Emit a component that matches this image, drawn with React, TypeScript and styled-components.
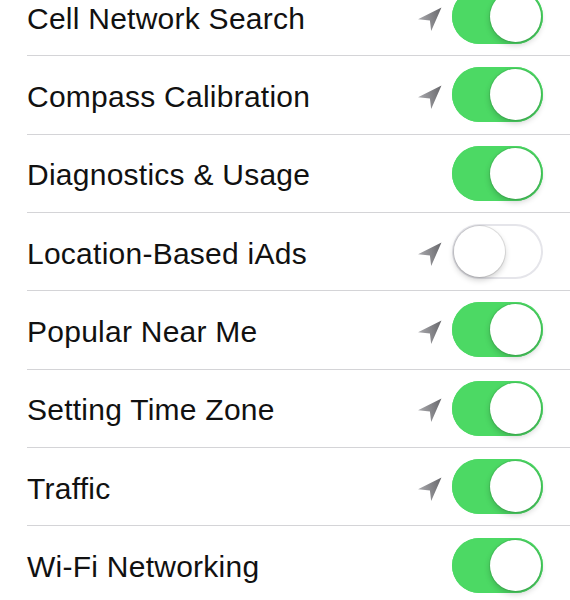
import React from 'react'
import styled, { createGlobalStyle } from 'styled-components'

const GlobalStyle = createGlobalStyle`
  html, body {
    margin: 0;
    padding: 0;
    background: #ffffff;
    overflow: hidden;
  }
  body {
    font-family: "Liberation Sans", Arial, sans-serif;
    -webkit-font-smoothing: antialiased;
  }
`

type Setting = {
  label: string
  on: boolean
  location: boolean
}

const settings: Setting[] = [
  { label: 'Cell Network Search', on: true, location: true },
  { label: 'Compass Calibration', on: true, location: true },
  { label: 'Diagnostics & Usage', on: true, location: false },
  { label: 'Location-Based iAds', on: false, location: true },
  { label: 'Popular Near Me', on: true, location: true },
  { label: 'Setting Time Zone', on: true, location: true },
  { label: 'Traffic', on: true, location: true },
  { label: 'Wi-Fi Networking', on: true, location: false },
]

const LocationArrow = () => (
  <ArrowIcon viewBox="0 0 24 24" aria-hidden>
    <defs>
      <linearGradient id="arrowShade" x1="0" y1="0.5" x2="1" y2="0.3">
        <stop offset="0" stopColor="#a9a9ad" />
        <stop offset="1" stopColor="#6a6a6e" />
      </linearGradient>
    </defs>
    <path d="M23.5 1.5 L1 12.6 L12.4 13.8 L13.6 24 Z" fill="url(#arrowShade)" />
  </ArrowIcon>
)

const App = () => {
  return (
    <>
      <GlobalStyle />
      <List>
        {settings.map((item) => (
          <Row key={item.label}>
            <Label>{item.label}</Label>
            <Accessory>
              {item.location && <LocationArrow />}
              <Switch $on={item.on}>
                <Knob $on={item.on} />
              </Switch>
            </Accessory>
          </Row>
        ))}
      </List>
    </>
  )
}

export default App

const List = styled.div`
  display: flex;
  flex-direction: column;
  margin-top: -22px;
  padding-left: 27px;
  background: #ffffff;
`

const Row = styled.div`
  display: flex;
  align-items: center;
  justify-content: space-between;
  height: 78.33px;
  box-sizing: border-box;
  padding-right: 27px;
  border-bottom: 1.5px solid #d4d4d7;

  &:last-child {
    border-bottom: none;
  }
`

const Label = styled.span`
  font-size: 30px;
  color: #111111;
  letter-spacing: 0.25px;
  padding-left: 0;
  padding-top: 4px;
`

const Accessory = styled.div`
  display: flex;
  align-items: center;
  gap: 10px;
`

const ArrowIcon = styled.svg`
  width: 25px;
  height: 25px;
  margin-top: 3px;
`

const Switch = styled.div<{ $on: boolean }>`
  position: relative;
  display: flex;
  align-items: center;
  justify-content: ${({ $on }) => ($on ? 'flex-end' : 'flex-start')};
  width: 91px;
  height: 55px;
  box-sizing: border-box;
  padding: 2px;
  border-radius: 28px;
  background: ${({ $on }) => ($on ? '#4cd964' : '#ffffff')};
  box-shadow: ${({ $on }) =>
    $on ? 'inset 0 0 0 1.5px #4cd964' : 'inset 0 0 0 2px #e5e5ea'};
`

const Knob = styled.div<{ $on: boolean }>`
  width: 51px;
  height: 51px;
  border-radius: 50%;
  background: #ffffff;
  box-shadow:
    0 3px 6px rgba(0, 0, 0, 0.2),
    0 0 0 1px rgba(0, 0, 0, ${({ $on }) => ($on ? '0.08' : '0.1')});
`
